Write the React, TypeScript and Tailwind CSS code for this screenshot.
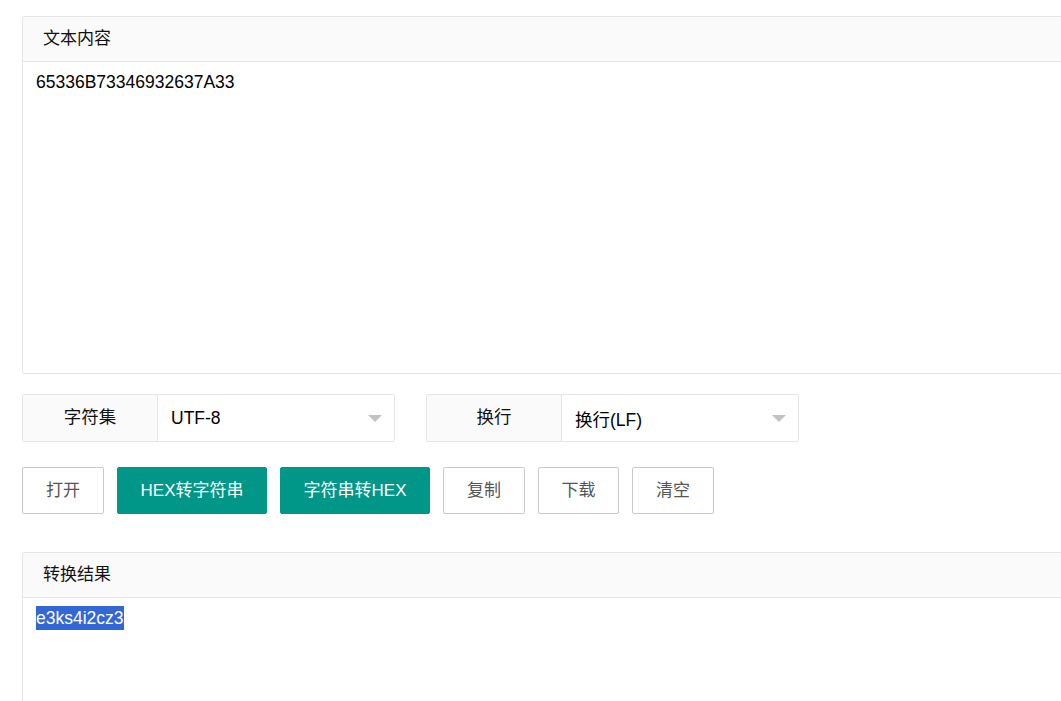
import React from "react";

const font = { fontFamily: '"Liberation Sans", Arial, "Noto Sans CJK SC", sans-serif' };

function Panel({ title, children, bodyH }: { title: string; children: React.ReactNode; bodyH: string }) {
  return (
    <div className="w-[1100px] border border-[#e6e6e6] rounded-[2px] bg-white">
      <div className="h-[45px] bg-[#fafafa] border-b border-[#e6e6e6] flex items-center pl-[20px] text-[17px] text-[#111]">
        {title}
      </div>
      <div className={`${bodyH} px-[13px] pt-[8px] text-[17.5px] leading-[24px] text-black`}>{children}</div>
    </div>
  );
}

function SelectGroup({ label, value, valueCls }: { label: string; value: string; valueCls?: string }) {
  return (
    <div className="flex w-[373px] h-[48px] border border-[#e6e6e6] rounded-[2px] bg-white">
      <div className="w-[135px] bg-[#fafafa] border-r border-[#e6e6e6] flex items-center justify-center text-[17.5px] text-[#111] pb-[2px]">
        {label}
      </div>
      <div className="flex-1 flex items-center pl-[13px] pr-[12px] text-[17.5px] text-black">
        <span className={`flex-1 ${valueCls ?? ""}`}>{value}</span>
        <span className="w-0 h-0 border-l-[7px] border-r-[7px] border-t-[7px] border-l-transparent border-r-transparent border-t-[#c2c2c2] mt-[1px]" />
      </div>
    </div>
  );
}

function Btn({ children, primary, w }: { children: React.ReactNode; primary?: boolean; w: string }) {
  return (
    <button
      className={`${w} h-[47px] rounded-[2px] text-[17px] flex items-center justify-center ${
        primary ? "bg-[#009688] text-white border border-[#009688]" : "bg-white text-[#555] border border-[#c9c9c9]"
      }`}
    >
      {children}
    </button>
  );
}

export default function App() {
  return (
    <div className="w-full h-[701px] overflow-hidden bg-white" style={font}>
      <div className="pl-[22px] pt-[16px] flex flex-col">
        <Panel title="文本内容" bodyH="h-[311px]">
          65336B73346932637A33
        </Panel>
        <div className="flex gap-[31px] mt-[20px]">
          <SelectGroup label="字符集" value="UTF-8" />
          <SelectGroup label="换行" value="换行(LF)" valueCls="pt-[4px]" />
        </div>
        <div className="flex gap-[13px] mt-[25px]">
          <Btn w="w-[82px]">打开</Btn>
          <Btn w="w-[150px]" primary>HEX转字符串</Btn>
          <Btn w="w-[150px]" primary>字符串转HEX</Btn>
          <Btn w="w-[82px]">复制</Btn>
          <Btn w="w-[81px]">下载</Btn>
          <Btn w="w-[82px]">清空</Btn>
        </div>
        <div className="mt-[38px]">
          <Panel title="转换结果" bodyH="h-[200px]">
            <span className="inline-block h-[24px] leading-[24px] bg-[#3367d6] text-white">e3ks4i2cz3</span>
          </Panel>
        </div>
      </div>
    </div>
  );
}
